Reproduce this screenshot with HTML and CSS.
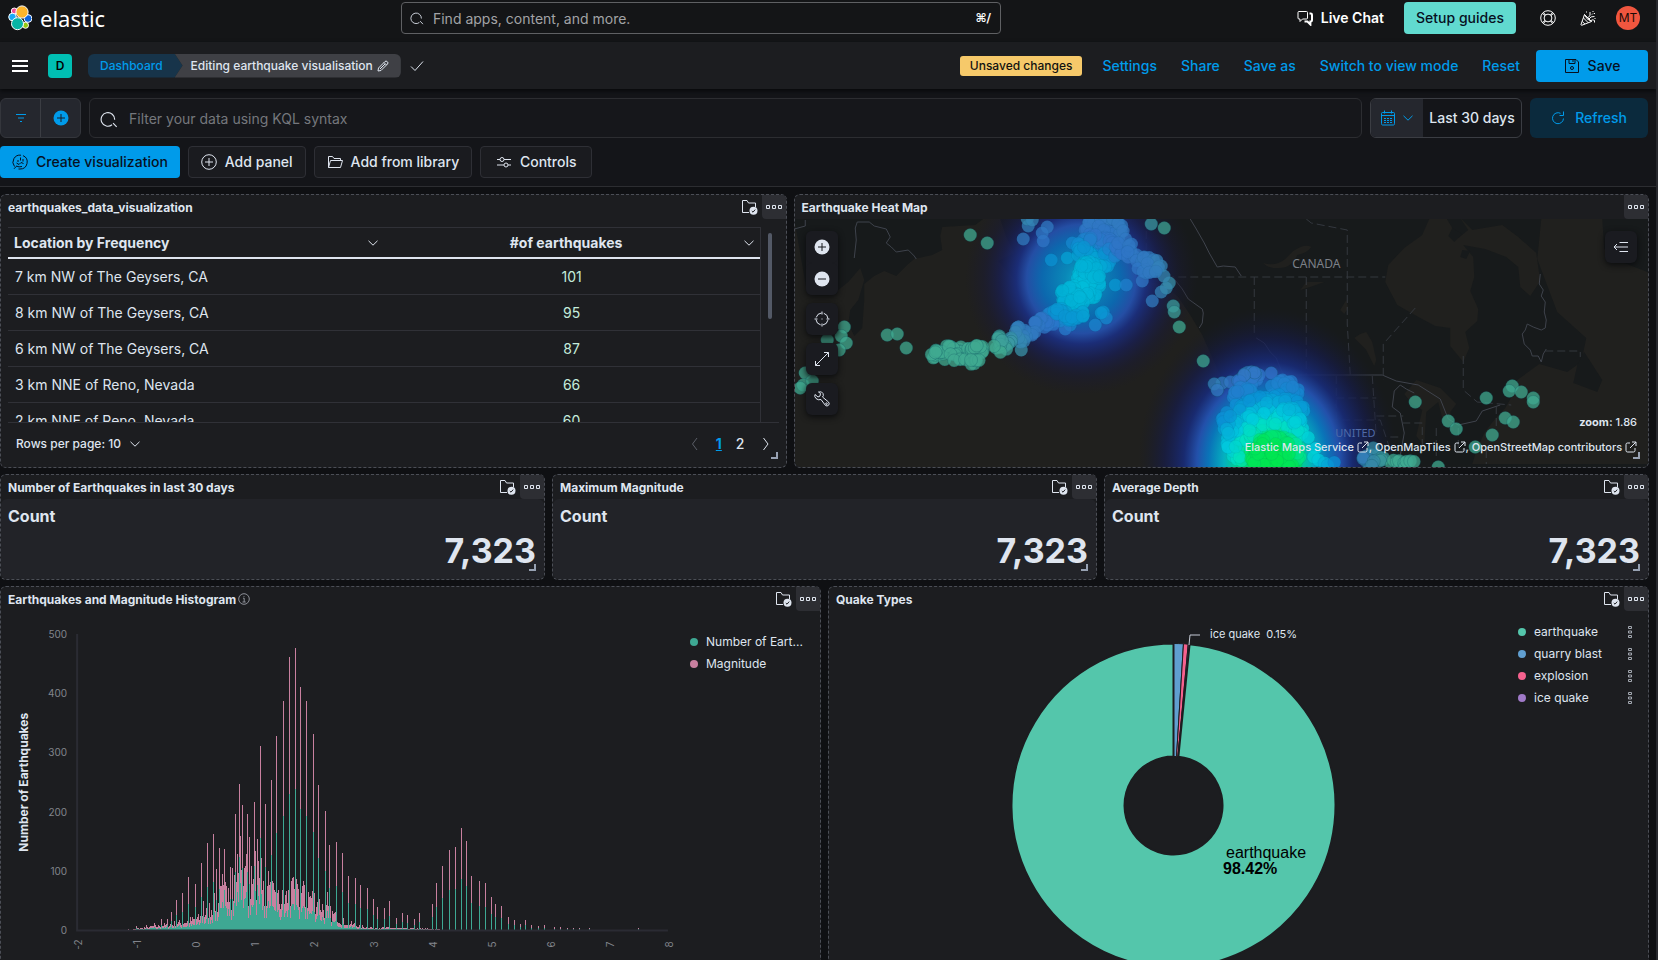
FILE: index.html
```html
<!DOCTYPE html>
<html lang="en">
<head>
<meta charset="utf-8">
<meta name="viewport" content="width=device-width, initial-scale=1">
<title>Editing earthquake visualisation - Elastic</title>
<link rel="stylesheet" href="styles.css">
</head>
<body>
<svg class="sprite" aria-hidden="true">
  <symbol id="i-search" viewBox="0 0 16 16"><path d="M10.700 13.100A6 6 0 1 1 13 8.600M11.600 11.600l3.200 3.400" /></symbol>
  <symbol id="i-chev" viewBox="2 2 12 12"><path d="M3.500 5.800 8 10.200l4.500-4.400"/></symbol>
  <symbol id="i-folder" viewBox="0 0 16 16"><path d="M1.500 13.500v-11h4l1.500 2h6.500v2M1.500 13.500l2-7h12l-2 7z"/></symbol>
  <symbol id="i-saved" viewBox="0 0 18 18"><path d="M8 14.500H1.500v-12H6l1.500 2.500h7V9"/><circle class="solid" cx="12.500" cy="12.800" r="4"/><path class="cut" d="m10.800 13 1.200 1.200 2.200-2.600"/></symbol>
  <symbol id="i-dots" viewBox="0 0 18 16"><path d="M1.500 6.500h3v3h-3zM7.500 6.500h3v3h-3zM13.500 6.500h3v3h-3z"/></symbol>
  <symbol id="i-vdots" viewBox="0 0 8 14"><path d="M2.500 1.500h3v2h-3zM2.500 6h3v2h-3zM2.500 10.500h3v2h-3z"/></symbol>
  <symbol id="i-popout" viewBox="0 0 12 12"><path d="M5 2H2.500Q1 2 1 3.500v6Q1 11 2.500 11h6Q10 11 10 9.500V7M7 1h4v4M11 1 5 7"/></symbol>
  <symbol id="i-corner" viewBox="0 0 7 7"><path class="solid" d="M5 0h2v7H0V5h5z"/></symbol>
</svg>

<div class="app">
  <header class="topbar">
    <a class="brand" href="#" aria-label="Elastic home">
      <svg class="brand-mark" viewBox="0 0 24 26" aria-hidden="true">
        <g stroke="#fff" stroke-width="1">
          <circle cx="6.300" cy="6" r="3" fill="#f04e98"/><circle cx="4.500" cy="12" r="3.800" fill="#1ba9f5"/>
          <circle cx="20" cy="13.500" r="3.900" fill="#0b64dd"/><circle cx="17.500" cy="20.300" r="3" fill="#93c90e"/>
          <circle cx="14" cy="7" r="6.100" fill="#fdb52a"/><circle cx="9.500" cy="18.700" r="6" fill="#07b5a5"/>
        </g>
      </svg>
      <span class="brand-name">elastic</span>
    </a>
    <label class="search">
      <svg class="icon i14"><use href="#i-search"/></svg>
      <input type="search" placeholder="Find apps, content, and more." aria-label="Find apps, content, and more">
      <kbd>⌘/</kbd>
    </label>
    <div class="top-actions">
      <button class="chat" type="button">
        <svg class="icon i16" viewBox="0 0 16 16"><path d="M2 1.500h7.500q1 0 1 1V8q0 1-1 1H5.500L3 11.500V9H2Q1 9 1 8V2.500q0-1 1-1z"/><path d="M12.500 3.500h1.200q1.300 0 1.300 1.200v5.600q0 1-1 1.200h-.6v3l-3-3H7.500" stroke-width="2"/></svg>
        Live Chat</button>
      <button class="guides" type="button">Setup guides</button>
      <button class="iconbtn" type="button" aria-label="Help"><svg class="icon i16" viewBox="0 0 16 16"><circle cx="8" cy="8" r="7.300"/><circle cx="8" cy="8" r="3.900"/><path d="m2.500 3.500 2.600 2M3.500 2.500l2 2.600M13.500 3.500l-2.600 2M12.500 2.500l-2 2.600M2.500 12.500l2.600-2M3.500 13.500l2-2.600M13.500 12.500l-2.600-2M12.500 13.500l-2-2.600"/></svg></button>
      <button class="iconbtn" type="button" aria-label="What's new"><svg class="icon i16" viewBox="0 0 16 16"><path d="M4.500 4.500 1 14.500q0 1 1 .7l9.500-3.700zM4.500 4.500q1.500 5 7 7M3.500 8l4.800 4.800M2.300 11.500l2.700 2.700M8 7.500q3-1 2-5.500M9 9q1.500-3 5.500-2.500M11 10.500q2-1.500 3.500 0v2M6.500 1.500v1M13 1v1M15 3.500h-1M12 4.500l1-1M14.500 8.500h1"/></svg></button>
      <button class="avatar" type="button" aria-label="Account">MT</button>
    </div>
  </header>

  <nav class="navbar">
    <button class="menu" type="button" aria-label="Menu"><svg class="i16" viewBox="0 0 16 12"><path d="M0 1h16M0 6h16M0 11h16" stroke="#fff" stroke-width="2"/></svg></button>
    <button class="space" type="button" aria-label="Space D">D</button>
    <div class="crumbs">
      <a class="crumb first" href="#">Dashboard</a>
      <a class="crumb last" href="#" aria-current="page">Editing earthquake visualisation
        <svg class="icon i12" viewBox="0 0 12 12"><path d="m1 11 .5-3L8 1.500q1-1 2.300.2T10.500 4L4 10.500zM7 2.500 9.500 5M3 9l5-5"/></svg></a>
    </div>
    <svg class="icon i14 check" viewBox="0 0 14 14"><path d="m1 7.500 4 4L13 2.500"/></svg>
    <span class="badge">Unsaved changes</span>
    <div class="links">
      <a href="#">Settings</a><a href="#">Share</a><a href="#">Save as</a><a href="#">Switch to view mode</a><a href="#">Reset</a>
    </div>
    <button class="save" type="button"><svg class="icon i16" viewBox="0 0 16 16"><path d="M1.500 1.500h10.500l2.500 2.500v10.500h-13zM5 1.500v4h6v-4M9 2v2"/><circle cx="8" cy="10" r="1.500"/></svg>Save</button>
  </nav>

  <section class="controls">
    <div class="query-row">
      <div class="filter-group">
        <button type="button" aria-label="Filter options"><svg class="icon i12" viewBox="0 0 12 12"><path d="M1 2.500h10M3 6h6M5 9.500h2"/></svg></button>
        <button type="button" aria-label="Add filter"><svg class="i16" viewBox="0 0 16 16"><circle cx="8" cy="8" r="7.500" fill="#009bea"/><path d="M8 4v8M4 8h8" stroke="#1b1d24"/></svg></button>
      </div>
      <label class="kql">
        <svg class="icon i18"><use href="#i-search"/></svg>
        <input type="text" placeholder="Filter your data using KQL syntax" aria-label="Filter your data using KQL syntax">
      </label>
      <div class="date">
        <button class="cal" type="button" aria-label="Date quick select">
          <svg class="icon i16" viewBox="0 0 16 16"><path d="M2.500 2.500h11q1 0 1 1v10q0 1.500-1 1.500h-11q-1 0-1-1.500v-10q0-1 1-1zM1.500 5.500h13M4.500.5v3M11.500.5v3"/><path d="M4 8.500h2M7 8.500h2M10 8.500h2M4 10.500h2M7 10.500h2M10 10.500h2M4 12.500h2M7 12.500h2M10 12.500h2"/></svg>
          <svg class="icon i12"><use href="#i-chev"/></svg>
        </button>
        <button class="range" type="button">Last 30 days</button>
      </div>
      <button class="refresh" type="button"><svg class="icon i14" viewBox="0 0 14 14"><path d="M12.500 7.500A5.500 5.500 0 1 1 9.500 2.300M12.500.5v4h-4"/></svg>Refresh</button>
    </div>
    <div class="tool-row">
      <button class="tool primary" type="button"><svg class="icon i16" viewBox="0 0 16 16"><path d="M2.500 12.500A7 7 0 0 1 9 1.200M11 1.600A7 7 0 0 1 8 15H6.500M2 14.800l2.500-2.600M4.500 9l2.500 1.500 2-2 2.500 1M6 6v2M8.500 3.500v3M11 5v2.500M4.200 12Q7 13.500 10 12.500"/></svg>Create visualization</button>
      <button class="tool" type="button"><svg class="icon i16" viewBox="0 0 16 16"><circle cx="8" cy="8" r="7.300"/><path d="M8 4v8M4 8h8"/></svg>Add panel</button>
      <button class="tool" type="button"><svg class="icon i16"><use href="#i-folder"/></svg>Add from library</button>
      <button class="tool" type="button"><svg class="icon i16" viewBox="0 0 16 16"><path d="M1 5.500h3M8 5.500h7M1 11h7M12 11h3"/><circle cx="6" cy="5.500" r="2"/><circle cx="10" cy="11" r="2"/></svg>Controls</button>
    </div>
  </section>

  <main class="dashboard">
    <section class="panel w23">
      <header class="phead"><h2>earthquakes_data_visualization</h2><svg class="icon i18 lib"><use href="#i-saved"/></svg><button class="more" type="button" aria-label="Panel options"><svg class="icon i18"><use href="#i-dots"/></svg></button></header>
      <div class="table-area">
        <div class="scroller">
          <div class="table-wrap">
            <table>
              <thead><tr>
                <th><span class="th">Location by Frequency<svg class="icon i12"><use href="#i-chev"/></svg></span></th>
                <th><span class="th mid"><span>#of earthquakes</span><svg class="icon i12"><use href="#i-chev"/></svg></span></th>
              </tr></thead>
              <tbody>
                <tr><td>7 km NW of The Geysers, CA</td><td>101</td></tr>
                <tr><td>8 km NW of The Geysers, CA</td><td>95</td></tr>
                <tr><td>6 km NW of The Geysers, CA</td><td>87</td></tr>
                <tr><td>3 km NNE of Reno, Nevada</td><td>66</td></tr>
                <tr><td>2 km NNE of Reno, Nevada</td><td>60</td></tr>
              </tbody>
            </table>
          </div>
          <div class="thumb"></div>
        </div>
        <div class="pager">
          <button class="rows" type="button">Rows per page: 10<svg class="icon i12"><use href="#i-chev"/></svg></button>
          <div class="pages">
            <svg class="icon i14 off" viewBox="0 0 14 14"><path d="M9 1 4.500 7 9 13"/></svg>
            <a class="cur" href="#">1</a><a href="#">2</a>
            <svg class="icon i14" viewBox="0 0 14 14"><path d="M4.500 1 9 7l-4.500 6"/></svg>
          </div>
        </div>
      </div>
      <svg class="corner"><use href="#i-corner"/></svg>
    </section>

    <section class="panel w25">
      <header class="phead"><h2>Earthquake Heat Map</h2><button class="more" type="button" aria-label="Panel options"><svg class="icon i18"><use href="#i-dots"/></svg></button></header>
      <div class="map">
        <svg class="map-canvas" viewBox="794 219 855 248" preserveAspectRatio="xMidYMid slice">
          <defs>
            <radialGradient id="heat1"><stop offset="0" stop-color="#0aa8c8"/><stop offset=".14" stop-color="#0a88b8"/><stop offset=".34" stop-color="#0c68ae"/><stop offset=".47" stop-color="#244ea4"/><stop offset=".56" stop-color="#1b2e7c" stop-opacity=".95"/><stop offset=".7" stop-color="#191f52" stop-opacity=".8"/><stop offset=".84" stop-color="#1a1b36" stop-opacity=".5"/><stop offset="1" stop-color="#1b1a2c" stop-opacity="0"/></radialGradient>
            <radialGradient id="heat2"><stop offset="0" stop-color="#00e84c"/><stop offset=".22" stop-color="#00d880"/><stop offset=".34" stop-color="#04b0c0"/><stop offset=".46" stop-color="#0a74b8"/><stop offset=".55" stop-color="#2350aa"/><stop offset=".65" stop-color="#182b78" stop-opacity=".9"/><stop offset=".8" stop-color="#161c4a" stop-opacity=".7"/><stop offset="1" stop-color="#171a2a" stop-opacity="0"/></radialGradient>
          </defs>
          <rect x="794" y="219" width="855" height="248" fill="#20201e"/>
          <g fill="#171a1b">
            <path d="M794 219h189l-8 6-33 2-2 9 2 14-10 5-18 4-6 5-12 12-12-5-10 5-10 8v16l-2 28-8 8-6-12 2-14 8-10 6-20-4-12-12 14-10 8-12 2-12 0-8-4z"/>
            <path d="M1000 219h650v248h-395l-3-30-10-22-22-40-10-22-8-18-12-20-12-18-14-12-20-4-40 4-46 6-28 14-10-6 14-14-20-6-16-18 16-8-8-16z"/>
          </g>
          <g fill="#20201e">
            <path d="m1429 219-7 16-18 13-16 17-3 17 12 23 23 13 15 8 15 2v18l13 16 6-14-4-16 12-11 1-12-8-18 4-14-1-20-10-12 22 4 21 8 12 10 2 20 10 9 10-15-4-28-18-16-16-12-30 5-12-12 8 12-10 8-12-20 4-10z"/>
            <path d="m1541 219-3 30-1 10 20 53 29 26-5 24-14 10-28-8-22 16-4 14-8 14-12 13-9 12-8 18-4 13h178V273l-26-10-20-14-2-30z"/>
            <path d="M1263 263q12 4 22-4l8-8q12-8 18-4-4 6-14 8-6 14-20 13-10 0-14-5zM1300 290l6-8 18 0-14 5zM1340 310l6-10 2 8-4 6zM1354 338l6-4 6-2 6 10 4 18-2 6-8-16zM1404 394l12-14 24 8 16 16-6 8 4 20-10-6-6-24-12 10-2 34-8-10 6-26-10-6z"/>
          </g>
          <path fill="#171a1b" d="m1584 352 18 28-5 12-24-9 4-18zM1462 250l8 1-4 8-6-2zM1448 236l4-8 10 6-8 8z"/>
          <g fill="none" stroke="#3f434c" stroke-width="1">
            <path d="m794 229 11-3 0-6M854 258l2-18-1-12 2-6 12 0 5 4 12 3 4 8-4 6 5 4 5 5 12-2 6 6 2 3M1190 219l6 10 8 14 5 10 8 14 6-1 12 1 6 9M1174 279l8 10 6 10 14 10 1 4-1 10-3 5M1256 338l8 5 6 9 6 6 4 10 4 7h98l14 6 22 4 22 14 8 20 10 6 18-4 6-10 18-6M1414 393l-8-4-6-4-6 6-2 16 8 6 4 20-6 34M1540 274l-1 10 4 6-2 6 4 6-1 10 2 8-1 8-4 2-8-3-6-3-2 6-3 4 2 10 6 6 2 6 6 0 3 6 2-8 3-5"/>
            <path stroke-dasharray="8 4" stroke="#34383f" d="M1166 277h219M1254 277v60M1306 277v98M1306 219l5 4 36 7v94l3 51M1415 308l-32 36v36M1463 356v34l14 12 34 3M1545 351h35v6M1146 219v56M1336 376v67M1372 376l4 60M1336 398h40M1330 420h50l10 30h30M1376 416h27M1402 423h20v30M1436 428v28M1390 437h12M1458 428v22M1496 406v24M1462 450h24v14M1310 405h26"/>
          </g>
          <g font-size="12" fill="#7c8088"><text x="1292" y="268">CANADA</text></g>
          <circle cx="1081" cy="279" r="116" fill="url(#heat1)"/>
          <ellipse cx="1268" cy="462" rx="130" ry="154" fill="url(#heat2)"/>
          <g id="quakes"></g>
          <g font-size="11" fill="#4f6aa8"><text x="1335" y="437">UNITED</text></g>
        </svg>
        <div class="map-tools">
          <div class="zoomers">
            <button type="button" aria-label="Zoom in"><svg class="i16" viewBox="0 0 16 16"><circle cx="8" cy="8" r="7.500" fill="#dfe5ef"/><path d="M8 4v8M4 8h8" stroke="#16181c"/></svg></button>
            <button type="button" aria-label="Zoom out"><svg class="i16" viewBox="0 0 16 16"><circle cx="8" cy="8" r="7.500" fill="#dfe5ef"/><path d="M4 8h8" stroke="#16181c"/></svg></button>
          </div>
          <button type="button" aria-label="Fit to data"><svg class="icon i16" viewBox="0 0 16 16"><circle cx="8" cy="8" r="6" stroke-dasharray="7 2.400" stroke-dashoffset="-1.200"/><path d="M8 .5v3M8 12.500v3M.5 8h3M12.500 8h3M7.500 8h1"/></svg></button>
          <button type="button" aria-label="Full extent"><svg class="icon i16" viewBox="0 0 16 16"><path d="M1.500 14.500l13-13M10 1.500h4.500V6M1.500 10v4.500H6"/></svg></button>
          <button type="button" aria-label="Tools"><svg class="icon i16" viewBox="0 0 16 16"><path d="M1 3.500 4 6l2-1 .5-2.500L4.500 1Q8 0 9 2.500T8.500 6l6 5q1.500 2 0 3.300t-3 .2L7 8.500Q4 9.500 2 7.500T1 3.500z"/><circle cx="12.500" cy="12.700" r=".8"/></svg></button>
        </div>
        <button class="layers" type="button" aria-label="Layers"><svg class="icon i16" viewBox="0 0 16 16"><path d="M1 8h14M6.500 3.500H15M6.500 12.500H15M4 5 1 8l3 3"/></svg></button>
        <div class="map-notes">
          <div class="zoom"><b>zoom:</b> 1.86</div>
          <div class="credit"><a href="#">Elastic Maps Service <svg class="icon i12"><use href="#i-popout"/></svg></a>, <a href="#">OpenMapTiles <svg class="icon i12"><use href="#i-popout"/></svg></a>, <a href="#">OpenStreetMap contributors <svg class="icon i12"><use href="#i-popout"/></svg></a></div>
        </div>
      </div>
      <svg class="corner"><use href="#i-corner"/></svg>
    </section>

    <section class="panel w16">
      <header class="phead"><h2>Number of Earthquakes in last 30 days</h2><svg class="icon i18 lib"><use href="#i-saved"/></svg><button class="more" type="button" aria-label="Panel options"><svg class="icon i18"><use href="#i-dots"/></svg></button></header>
      <div class="metric"><h3>Count</h3><p>7,323</p></div>
      <svg class="corner"><use href="#i-corner"/></svg>
    </section>
    <section class="panel w16">
      <header class="phead"><h2>Maximum Magnitude</h2><svg class="icon i18 lib"><use href="#i-saved"/></svg><button class="more" type="button" aria-label="Panel options"><svg class="icon i18"><use href="#i-dots"/></svg></button></header>
      <div class="metric"><h3>Count</h3><p>7,323</p></div>
      <svg class="corner"><use href="#i-corner"/></svg>
    </section>
    <section class="panel w16">
      <header class="phead"><h2>Average Depth</h2><svg class="icon i18 lib"><use href="#i-saved"/></svg><button class="more" type="button" aria-label="Panel options"><svg class="icon i18"><use href="#i-dots"/></svg></button></header>
      <div class="metric"><h3>Count</h3><p>7,323</p></div>
      <svg class="corner"><use href="#i-corner"/></svg>
    </section>

    <section class="panel w24">
      <header class="phead"><h2>Earthquakes and Magnitude Histogram</h2><svg class="icon i12 info" viewBox="0 0 12 12"><circle cx="6" cy="6" r="5.300"/><path d="M5 5.200h1.200V9M4.500 9h3.200M6 3v.8"/></svg><svg class="icon i18 lib"><use href="#i-saved"/></svg><button class="more" type="button" aria-label="Panel options"><svg class="icon i18"><use href="#i-dots"/></svg></button></header>
      <div class="chart">
        <svg class="plot" viewBox="1 611 688 375">
          <g id="bars" shape-rendering="crispEdges"></g>
          <path d="M77 634v296h590" fill="none" stroke="#2a2b33" stroke-width="2"/>
          <g class="yticks"><text x="67" y="638">500</text><text x="67" y="697">400</text><text x="67" y="756">300</text><text x="67" y="816">200</text><text x="67" y="875">100</text><text x="67" y="934">0</text></g>
          <g class="xticks" id="xticks"></g>
          <text class="axis-title" transform="translate(28 782) rotate(-90)">Number of Earthquakes</text>
        </svg>
        <ul class="legend hist"><li><i class="dot c-num"></i>Number of Eart...</li><li><i class="dot c-mag"></i>Magnitude</li></ul>
      </div>
    </section>
    <section class="panel w24">
      <header class="phead"><h2>Quake Types</h2><svg class="icon i18 lib"><use href="#i-saved"/></svg><button class="more" type="button" aria-label="Panel options"><svg class="icon i18"><use href="#i-dots"/></svg></button></header>
      <div class="chart">
        <svg class="plot" viewBox="829 611 681 380">
          <g id="pie" stroke="#1c1d20" stroke-width="2"></g>
          <path d="M1189 645l1-10h10" fill="none" stroke="#c5cbd6"/>
          <text class="callout" x="1210" y="638" xml:space="preserve">ice quake  0.15%</text>
          <g class="slice-label"><text x="1226" y="858">earthquake</text><text x="1223" y="874" font-weight="700">98.42%</text></g>
        </svg>
        <ul class="legend types">
          <li><i class="dot c-eq"></i>earthquake<svg class="icon vd"><use href="#i-vdots"/></svg></li>
          <li><i class="dot c-qb"></i>quarry blast<svg class="icon vd"><use href="#i-vdots"/></svg></li>
          <li><i class="dot c-ex"></i>explosion<svg class="icon vd"><use href="#i-vdots"/></svg></li>
          <li><i class="dot c-iq"></i>ice quake<svg class="icon vd"><use href="#i-vdots"/></svg></li>
        </ul>
      </div>
    </section>
  </main>
</div>
<script src="charts.js"></script>
</body>
</html>
```
FILE: styles.css
```css
* { box-sizing: border-box; }
body { margin: 0; background: #0f1013; color: #dfe5ef; font: 14px/20px Inter, "Liberation Sans", sans-serif; }
button, input { font: inherit; color: inherit; background: none; border: 0; padding: 0; margin: 0; outline: 0; }
a { color: inherit; text-decoration: none; }
h2, h3, p, ul { margin: 0; padding: 0; list-style: none; }
svg { display: block; flex: none; }
.sprite { position: absolute; width: 0; height: 0; }
.icon { fill: none; stroke: currentColor; stroke-width: 1; }
.solid { fill: currentColor; stroke: none; }
.cut { stroke: #1c1d20; stroke-width: 1; }
.i12 { width: 12px; height: 12px; }
.i14 { width: 14px; height: 14px; }
.i16 { width: 16px; height: 16px; }
.i18 { width: 18px; height: 18px; }

.app { height: 100vh; display: flex; flex-direction: column; overflow: hidden; border-right: 2px solid #27282d; }

.topbar { flex: none; height: 42px; padding: 0 16px 6px 8px; display: flex; align-items: center; justify-content: space-between; background: #141517; }
.brand { display: flex; align-items: center; gap: 8px; color: #fff; }
.brand-mark { width: 24px; height: 26px; }
.brand-name { font: 400 22px/26px "Noto Sans", sans-serif; }
.search { width: 600px; height: 32px; display: flex; align-items: center; gap: 9px; padding: 0 9px 0 8px; border: 1px solid #5f6063; border-radius: 4px; }
.search .icon { color: #dfe5ef; }
.search input { flex: 1; min-width: 0; padding-top: 2px; }
.search input::placeholder { color: #a2a3a6; opacity: 1; }
.search kbd { font: 700 12px/16px "DejaVu Sans", sans-serif; color: #fff; }
.top-actions { display: flex; align-items: center; color: #fff; font-weight: 500; }
.chat { display: flex; align-items: center; gap: 8px; margin-right: 20px; font-weight: 600; }
.guides { height: 32px; width: 112px; border-radius: 4px; background: #61dacf; color: #07101f; margin-right: 12px; }
.iconbtn { width: 40px; height: 32px; display: flex; align-items: center; justify-content: center; }
.avatar { width: 24px; height: 24px; margin-left: 8px; border-radius: 50%; background: #f0563f; color: #1a0a06; font-size: 12px; font-weight: 400; text-align: center; }

.navbar { flex: none; height: 47px; padding: 0 8px 0 12px; display: flex; align-items: center; background: #1c1d20; position: relative; box-shadow: 0 2px 4px #08090b; }
.menu { margin-right: 20px; }
.space { width: 24px; height: 24px; border-radius: 4px; background: #00bfb3; color: #000; font-size: 12px; line-height: 24px; font-weight: 600; margin-right: 16px; }
.crumbs { display: flex; font-size: 12px; line-height: 24px; font-weight: 500; }
.crumb { height: 24px; padding: 0 12px; }
.crumb.first { background: #17344a; color: #009bea; border-radius: 6px 0 0 6px; padding-right: 20px; clip-path: polygon(0 0, calc(100% - 8px) 0, 100% 50%, calc(100% - 8px) 100%, 0 100%); }
.crumb.last { display: flex; align-items: center; gap: 4px; background: #3f4045; border-radius: 0 6px 6px 0; padding-left: 16px; margin-left: -8px; clip-path: polygon(0 0, 100% 0, 100% 100%, 0 100%, 8px 50%); }
.check { margin-left: 9px; margin-right: auto; }
.badge { height: 20px; padding: 0 10px; border-radius: 3px; background: #f6c96a; color: #111; font-size: 12px; font-weight: 500; margin-right: 20px; }
.links { display: flex; gap: 24px; margin-right: 16px; color: #009bea; font-weight: 500; }
.save { width: 112px; height: 32px; display: flex; align-items: center; justify-content: center; gap: 8px; background: #009bea; color: #07101f; font-weight: 500; border-radius: 4px; }

.controls { flex: none; padding: 9px 0 8px; display: flex; flex-direction: column; gap: 8px; background: #141519; border-bottom: 1px solid #2c2d31; }
.query-row { display: flex; gap: 8px; height: 40px; padding-right: 8px; }
.filter-group { display: flex; width: 81px; border: 1px solid #34363c; border-radius: 6px; background: #25272e; color: #009bea; }
.filter-group button { flex: 1; display: flex; align-items: center; justify-content: center; }
.filter-group button + button { border-left: 1px solid #3b3d43; }
.kql { flex: 1; display: flex; align-items: center; gap: 11px; padding: 0 10px; border: 1px solid #2c2d31; border-radius: 6px; background: #16171b; }
.kql input { flex: 1; min-width: 0; padding-top: 2px; }
.kql .icon { margin-top: 2px; }
.kql input::placeholder { color: #75777d; opacity: 1; }
.date { display: flex; width: 152px; border: 1px solid #3b3d43; border-radius: 6px; overflow: hidden; font-weight: 500; }
.cal { width: 52px; display: flex; align-items: center; justify-content: center; gap: 6px; background: #25272e; color: #009bea; }
.range { flex: 1; }
.refresh { width: 118px; display: flex; align-items: center; justify-content: center; gap: 10px; border-radius: 6px; background: #0b2a3d; color: #009bea; font-weight: 500; }
.tool-row { display: flex; gap: 8px; }
.tool { min-width: 112px; height: 32px; padding: 0 12px; display: flex; align-items: center; justify-content: center; gap: 8px; border: 1px solid #2e2f35; border-radius: 4px; background: #1a1b1f; font-weight: 500; }
.tool.primary { padding: 0 12px; border: 0; background: #009bea; color: #07101f; }

.dashboard { flex: 1; min-height: 0; overflow: hidden; padding: 7px 7px 0 0; display: grid; grid-template-columns: repeat(48, minmax(0, 1fr)); grid-auto-rows: max-content; gap: 6px 7px; background: #0f1013; }
.panel { position: relative; min-width: 0; border: 1px dashed #4b4e56; border-radius: 6px; background: #1c1d20; display: flex; flex-direction: column; }
.w23 { grid-column: span 23; }
.w25 { grid-column: span 25; }
.w16 { grid-column: span 16; }
.w24 { grid-column: span 24; }
.phead { flex: none; height: 24px; display: flex; align-items: center; padding-left: 7px; }
.phead h2 { padding-top: 2px; font-size: 12px; line-height: 22px; font-weight: 700; white-space: nowrap; }
.info { color: #8d9098; margin-left: 2px; }
.more { width: 24px; height: 24px; padding: 0 3px; border-radius: 0 4px 0 4px; background: #2d2e33; }
.phead .more { margin-left: auto; }
.phead .lib { margin-left: auto; margin-right: 3px; }
.phead .lib + .more { margin-left: 0; }
.corner { position: absolute; right: 8px; bottom: 8px; width: 7px; height: 7px; color: #98a2b3; }

.table-area { padding: 8px 7px 0; }
.scroller { height: 196px; overflow: hidden; display: flex; border-bottom: 1px solid #303137; }
.table-wrap { flex: 1; min-width: 0; }
table { width: 100%; border-collapse: separate; border-spacing: 0; table-layout: fixed; border-top: 1px solid #303137; border-right: 1px solid #303137; }
th { height: 31px; padding: 0 5px 0 6px; border-bottom: 2px solid #dfe5ef; text-align: left; font-weight: 700; }
.th { display: flex; align-items: center; justify-content: space-between; }
.th.mid span { flex: 1; text-align: center; }
td { height: 36px; padding: 0 7px; border-bottom: 1px solid #303137; }
td + td { text-align: center; color: #c4ecdc; }
.thumb { width: 4px; height: 86px; margin: 6px 7px 0; border-radius: 2px; background: #535966; }
.pager { height: 41px; padding: 0 6px 0 8px; display: flex; align-items: center; justify-content: space-between; font-weight: 500; }
.rows { display: flex; align-items: center; gap: 8px; font-size: 12px; font-weight: 500; }
.pages { display: flex; align-items: center; gap: 14px; }
.off { color: #5a5e67; }
.cur { color: #009bea; font-weight: 700; text-decoration: underline; }

.map { position: relative; height: 248px; overflow: hidden; border-radius: 0 0 6px 6px; }
.map-canvas { width: 100%; height: 100%; }
.map-canvas text { font-family: "Noto Sans", sans-serif; }
.map-tools { position: absolute; left: 11px; top: 12px; display: flex; flex-direction: column; gap: 8px; }
.map-tools button, .layers { width: 32px; height: 32px; display: flex; align-items: center; justify-content: center; background: #1a1b20; border-radius: 6px; box-shadow: 0 2px 6px #0a0b0d; }
.layers { position: absolute; right: 11px; top: 12px; }
.zoomers { background: #1a1b20; border-radius: 6px; box-shadow: 0 2px 6px #0a0b0d; }
.map-tools .zoomers button { box-shadow: none; }
.map-notes { position: absolute; right: 11px; bottom: 11px; font-size: 11px; line-height: 18px; font-weight: 500; text-align: right; display: flex; flex-direction: column; gap: 7px; }
.map-notes svg { display: inline-block; vertical-align: -2px; }

.metric { height: 80px; padding: 7px 8px 7px 7px; background: #222328; border-radius: 6px; }
.metric h3 { font-size: 16px; line-height: 20px; font-weight: 700; }
.metric p { font-size: 34px; line-height: 50px; font-weight: 700; text-align: right; }

.chart { display: flex; align-items: flex-start; }
.plot { flex: 1; min-width: 0; }
.plot text { font-family: Inter, "Liberation Sans", sans-serif; }
.plot .slice-label text { font-family: "Liberation Sans", Arial, sans-serif; font-size: 16px; fill: #000; }
.yticks, .xticks { font-size: 10px; fill: #82858c; text-anchor: end; }
.xticks { text-anchor: middle; }
.axis-title { font-size: 12px; font-weight: 700; fill: #dfe5ef; text-anchor: middle; }
.callout { font-size: 11px; fill: #dfe5ef; }
.legend { font-size: 12px; line-height: 22px; }
.legend li { display: flex; align-items: center; gap: 8px; height: 22px; white-space: nowrap; }
.hist { width: 130px; padding-top: 20px; }
.types { width: 138px; padding: 10px 14px 0 8px; }
.dot { width: 8px; height: 8px; border-radius: 50%; }
.vd { width: 8px; height: 14px; margin-left: auto; color: #a3a8b1; }
.c-num { background: #3ea893; }
.c-mag { background: #c8809f; }
.c-eq { background: #54c6ab; }
.c-qb { background: #609fd0; }
.c-ex { background: #f6618e; }
.c-iq { background: #a07ac8; }
```
FILE: charts.js
```js
const NS = 'http://www.w3.org/2000/svg';
let seed = 7;
const rnd = () => (seed = (seed * 16807) % 2147483647) / 2147483647;
const add = (parent, tag, attrs) => {
  const el = document.createElementNS(NS, tag);
  for (const k in attrs) el.setAttribute(k, attrs[k]);
  parent.appendChild(el);
  return el;
};
const lerpTable = (table, v) => {
  if (v <= table[0][0]) return table[0][1];
  for (let i = 1; i < table.length; i++) {
    const [x0, y0] = table[i - 1], [x1, y1] = table[i];
    if (v <= x1) return y0 + (y1 - y0) * (v - x0) / (x1 - x0);
  }
  return table[table.length - 1][1];
};

/* Histogram: [x, height] of the tall bars, over a dense low background */
const bars = document.getElementById('bars');
const bar = (x, h) => {
  add(bars, 'rect', { x, y: 930 - h, width: 1, height: h, fill: '#c8809f' });
  add(bars, 'rect', { x, y: 930 - h / 2, width: 1, height: h / 2, fill: '#3ea893' });
};
const floor = [[125, 0], [140, 2], [160, 5], [180, 8], [200, 13], [215, 30], [228, 42], [245, 52], [262, 46], [280, 32], [295, 42], [312, 36], [328, 20], [345, 8], [365, 3], [400, 2], [440, 1], [445, 0]];
for (let x = 126; x < 445; x++) {
  const h = lerpTable(floor, x) * (0.45 + 0.85 * rnd());
  if (h > 0.8) bar(x, Math.round(h));
}
const peaks = [[385,926],[410,918],[438,914],[463,910],[484,898],[501,896],[513,876],[530,840],[547,818],[565,772],[585,791],[604,730],[610,844],[621,669],[639,642],[649,748],[657,684],[660,798],[668,763],[674,687],[684,804],[692,741],[696,743],[703,765],[706,582],[712,701],[717,492],[721,648],[727,555],[733,745],[738,702],[741,581],[748,652],[753,780],[762,545],[766,692],[771,657],[775,724],[780,379],[784,713],[790,782],[797,552],[804,752],[808,795],[813,481],[827,815],[830,347],[851,243],[869,112],[873,783],[886,84],[892,792],[901,201],[914,795],[919,243],[939,343],[954,496],[975,574],[983,815],[989,674],[1010,667],[1028,698],[1042,768],[1062,773],[1077,794],[1098,805],[1116,837],[1130,862],[1151,865],[1165,844],[1187,893],[1204,879],[1218,886],[1240,896],[1254,879],[1293,851],[1307,790],[1324,738],[1346,690],[1363,681],[1381,624],[1395,663],[1412,769],[1434,783],[1452,790],[1470,830],[1483,851],[1501,858],[1522,890],[1540,900],[1557,911],[1572,900],[1590,914],[1611,918],[1629,914],[1660,921],[1678,921],[1699,925],[1716,925],[1734,925],[1766,925],[1911,925]];
for (const [x, y] of peaks) bar(Math.floor(x / 3), Math.round((930 - y) / 3));
const xt = document.getElementById('xticks');
for (let i = -2; i <= 8; i++) {
  add(xt, 'text', { transform: `translate(${Math.round(82 + (i + 2) * 59)} 944) rotate(-90)` }).textContent = i;
}

/* Donut */
const pie = document.getElementById('pie');
const slice = (a0, a1, fill, sw) => {
  const p = (r, a) => `${(1173.5 + r * Math.sin(a * 2 * Math.PI)).toFixed(2)} ${(805.5 - r * Math.cos(a * 2 * Math.PI)).toFixed(2)}`;
  const big = a1 - a0 > 0.5 ? 1 : 0;
  add(pie, 'path', { d: `M${p(162, a0)}A162 162 0 ${big} 1 ${p(162, a1)}L${p(49, a1)}A49 49 0 ${big} 0 ${p(49, a0)}Z`, fill, 'stroke-width': sw });
};
slice(0, 0.0098, '#609fd0', 1);
slice(0.0098, 0.0145, '#f6618e', 1);
slice(0.0145, 0.0158, '#a07ac8', 1);
slice(0.0158, 1, '#54c6ab', 2);

/* Map points, coloured by distance from the two hot spots */
const quakes = document.getElementById('quakes');
const mix = (stops, d) => {
  const ch = i => Math.round(lerpTable(stops.map(s => [s[0], s[1][i]]), d));
  return `rgb(${ch(0)},${ch(1)},${ch(2)})`;
};
const green = [64, 170, 144];
const ramp1 = [[0, [0, 190, 218]], [22, [2, 176, 214]], [38, [10, 146, 210]], [50, [46, 116, 200]], [76, [50, 124, 190]], [104, green]];
const ramp2 = [[0, [0, 232, 76]], [24, [0, 228, 90]], [36, [0, 226, 190]], [50, [0, 204, 222]], [68, [10, 144, 212]], [90, [48, 116, 200]], [114, [54, 140, 160]], [130, green]];
const dot = (x, y) => {
  const d1 = Math.hypot(x - 1081, y - 284), d2 = Math.hypot((x - 1272) * 1.1, y - 463);
  const c = d1 < d2 ? mix(ramp1, d1) : mix(ramp2, d2);
  const far = Math.min(d1, d2) > 90;
  add(quakes, 'circle', { cx: x.toFixed(1), cy: y.toFixed(1), r: 6.5, fill: c, 'fill-opacity': 0.75, stroke: '#0a5060', 'stroke-opacity': far ? 0.25 : 0.08 });
};
const blob = (cx, cy, rx, ry, n) => {
  for (let i = 0; i < n; i++) {
    const a = rnd() * 6.283, r = Math.sqrt(rnd());
    dot(cx + Math.cos(a) * r * rx, cy + Math.sin(a) * r * ry);
  }
};
const path = (pts, spread, step) => {
  for (let i = 1; i < pts.length; i++) {
    const [x0, y0] = pts[i - 1], [x1, y1] = pts[i], n = Math.max(1, Math.round(Math.hypot(x1 - x0, y1 - y0) / step));
    for (let k = 0; k < n; k++) dot(x0 + (x1 - x0) * k / n + (rnd() - 0.5) * spread, y0 + (y1 - y0) * k / n + (rnd() - 0.5) * spread);
  }
};
const singles = [[970,235],[987,243],[844,327],[827,340],[841,336],[846,343],[839,350],[887,335],[897,334],[906,348],[805,373],[803,385],[812,381],[800,388],[1023,239],[1028,226],[1047,227],[1042,233],[1043,241],[1027,219],[1032,220],[1051,260],[1067,258],[1072,243],[1151,224],[1164,228],[1161,266],[1169,283],[1161,292],[1152,301],[1166,288],[1173,306],[1174,312],[1179,327],[1203,361],[1115,285],[1126,285],[1142,281],[1103,312],[1106,318],[1095,325],[1101,313],[1021,350],[996,348],[1070,325],[1065,329],[1415,402],[1486,398],[1512,386],[1509,391],[1521,392],[1533,398],[1533,402],[1448,421],[1456,429],[1505,418],[1513,422],[1492,435],[1475,447],[1438,467],[1222,383],[1214,384],[1230,382],[1217,390],[1271,373]];
singles.forEach(p => dot(...p));
blob(1103, 230, 20, 14, 60);
blob(1097, 252, 22, 18, 70);
blob(1088, 281, 12, 20, 80);
blob(1074, 296, 14, 12, 40);
path([[1062, 312], [1045, 322], [1030, 330], [1015, 337], [1000, 345], [993, 349]], 13, 1.5);
blob(1068, 314, 16, 8, 20);
path([[1118, 246], [1136, 254], [1148, 266], [1158, 278]], 18, 1.5);
blob(934, 353, 5, 5, 8);
blob(954, 353, 19, 8, 34);
blob(979, 350, 8, 7, 16);
blob(975, 362, 7, 5, 6);
blob(1249, 378, 12, 8, 22);
blob(1244, 398, 12, 12, 36);
blob(1284, 392, 16, 12, 40);
blob(1270, 410, 34, 14, 120);
blob(1248, 440, 22, 24, 80);
blob(1288, 428, 16, 22, 70);
blob(1275, 454, 26, 18, 150);
path([[1310, 440], [1322, 466], [1345, 466]], 8, 8);
blob(1372, 460, 12, 7, 20);
dot(1373, 448);
path([[1392, 463], [1414, 464]], 6, 2);
blob(1226, 424, 6, 12, 12);
```
